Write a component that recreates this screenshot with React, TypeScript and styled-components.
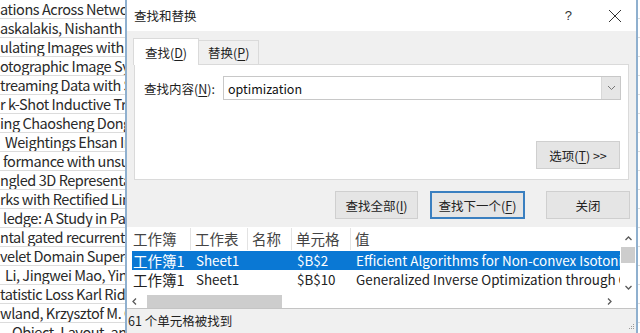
import styled, { createGlobalStyle } from 'styled-components';

const GlobalStyle = createGlobalStyle`
  html, body {
    margin: 0;
    padding: 0;
    background: #ffffff;
  }
  body {
    font-family: 'Noto Sans CJK SC', 'Noto Sans', sans-serif;
  }
`;

const sheetRows = [
  { text: 'ations Across Networks', indent: 0 },
  { text: 'askalakis, Nishanth Dikkala', indent: 0 },
  { text: 'ulating Images with Sketches', indent: 0 },
  { text: 'otographic Image Synthesis', indent: 0 },
  { text: 'treaming Data with Side', indent: 0 },
  { text: 'r k-Shot Inductive Transfer', indent: 0 },
  { text: 'ing Chaosheng Dong', indent: 0 },
  { text: 'Weightings Ehsan Imani', indent: 5 },
  { text: 'formance with unsupervised', indent: 3 },
  { text: 'ngled 3D Representations', indent: 0 },
  { text: 'rks with Rectified Linear', indent: 0 },
  { text: 'ledge: A Study in Paraphrase', indent: 3 },
  { text: 'ntal gated recurrent units', indent: 0 },
  { text: 'velet Domain Super-Resolution', indent: 0 },
  { text: 'Li, Jingwei Mao, Yin Zhang', indent: 5 },
  { text: 'tatistic Loss Karl Ridgeway', indent: 0 },
  { text: 'wland, Krzysztof M. Choromanski', indent: 0 },
  { text: 'Object, Layout, and Stuff', indent: 12 },
];

const results = [
  { book: '工作簿1', sheet: 'Sheet1', name: '', cell: '$B$2', value: 'Efficient Algorithms for Non-convex Isotonic Regression', selected: true },
  { book: '工作簿1', sheet: 'Sheet1', name: '', cell: '$B$10', value: 'Generalized Inverse Optimization through Online Learning', selected: false },
];

const Chevron = ({ dir }: { dir: 'up' | 'down' | 'left' | 'right' }) => {
  const paths = {
    up: 'M1.5 6 L4.5 3 L7.5 6',
    down: 'M1.5 3 L4.5 6 L7.5 3',
    left: 'M6 1.5 L3 4.5 L6 7.5',
    right: 'M3 1.5 L6 4.5 L3 7.5',
  };
  return (
    <ChevronSvg width="9" height="9" viewBox="0 0 9 9">
      <path d={paths[dir]} fill="none" stroke="#5a5a5a" strokeWidth="1.3" />
    </ChevronSvg>
  );
};

const App = () => {
  return (
    <>
      <GlobalStyle />
      <Screen>
        <Sheet>
          {sheetRows.map((row, i) => (
            <SheetRow key={i} $indent={row.indent}>
              {row.text}
            </SheetRow>
          ))}
        </Sheet>

        <Dialog>
          <TitleBar>
            <Title>查找和替换</Title>
            <TitleButtons>
              <HelpMark>?</HelpMark>
              <svg width="14" height="14" viewBox="0 0 14 14">
                <path d="M1 1 L13 13 M13 1 L1 13" stroke="#333" strokeWidth="1" />
              </svg>
            </TitleButtons>
          </TitleBar>

          <Body>
            <Tabs>
              <Tab $active>
                查找(<u>D</u>)
              </Tab>
              <Tab>
                替换(<u>P</u>)
              </Tab>
            </Tabs>
            <TabPanel>
              <FieldRow>
                <Label>
                  查找内容(<u>N</u>):
                </Label>
                <Combo>
                  <ComboText>optimization</ComboText>
                  <ComboArrow>
                    <svg width="9" height="6" viewBox="0 0 9 6">
                      <path d="M1 1 L4.5 4.5 L8 1" fill="none" stroke="#777" strokeWidth="1" />
                    </svg>
                  </ComboArrow>
                </Combo>
              </FieldRow>
              <OptionsRow>
                <Button $width={84}>
                  选项(<u>T</u>) &gt;&gt;
                </Button>
              </OptionsRow>
            </TabPanel>

            <ActionRow>
              <Button $width={83}>
                查找全部(<u>I</u>)
              </Button>
              <Button $width={95} $focused>
                查找下一个(<u>F</u>)
              </Button>
              <Button $width={84} $gapLeft={9}>
                关闭
              </Button>
            </ActionRow>
          </Body>

          <Results>
            <ListArea>
              <Table>
                <HeaderRow>
                  <HeadCell $first>工作簿</HeadCell>
                  <HeadCell>工作表</HeadCell>
                  <HeadCell>名称</HeadCell>
                  <HeadCell>单元格</HeadCell>
                  <HeadCell $last>值</HeadCell>
                </HeaderRow>
                {results.map((r, i) => (
                  <ResultRow key={i} $selected={r.selected}>
                    <Cell $first>{r.book}</Cell>
                    <Cell>{r.sheet}</Cell>
                    <Cell>{r.name}</Cell>
                    <Cell>{r.cell}</Cell>
                    <Cell>{r.value}</Cell>
                  </ResultRow>
                ))}
              </Table>
              <VScroll>
                <Chevron dir="up" />
                <VThumb />
                <Spacer />
                <Chevron dir="down" />
              </VScroll>
            </ListArea>
            <HScroll>
              <Chevron dir="left" />
              <HThumb />
              <Spacer />
              <Chevron dir="right" />
            </HScroll>
          </Results>

          <StatusBar>
            61 个单元格被找到
            <Grip>
              <svg width="8" height="8" viewBox="0 0 8 8">
                <rect x="6" y="2" width="1" height="1" fill="#9a9a9a" />
                <rect x="4" y="4" width="1" height="1" fill="#9a9a9a" />
                <rect x="6" y="4" width="1" height="1" fill="#9a9a9a" />
                <rect x="2" y="6" width="1" height="1" fill="#9a9a9a" />
                <rect x="4" y="6" width="1" height="1" fill="#9a9a9a" />
                <rect x="6" y="6" width="1" height="1" fill="#9a9a9a" />
              </svg>
            </Grip>
          </StatusBar>
        </Dialog>
      </Screen>
    </>
  );
};

const Screen = styled.div`
  position: relative;
  width: 640px;
  height: 333px;
  overflow: hidden;
  background: #ffffff;
`;

const Sheet = styled.div`
  display: flex;
  flex-direction: column;
  width: 640px;
`;

const SheetRow = styled.div<{ $indent: number }>`
  height: 18px;
  line-height: 17px;
  border-bottom: 1px solid #dcdcdc;
  padding-left: ${(p) => p.$indent}px;
  font-family: 'Noto Sans CJK SC', 'Noto Sans', sans-serif;
  font-size: 14.5px;
  letter-spacing: -0.45px;
  color: #2a2a2a;
  white-space: nowrap;
  overflow: hidden;
`;

const Dialog = styled.div`
  position: absolute;
  left: 125px;
  top: 0;
  width: 509px;
  height: 333px;
  border-left: 2px solid #8fb0cf;
  border-right: 2px solid #8fb0cf;
  background: #f0f0f0;
  overflow: hidden;

  display: flex;
  flex-direction: column;
  font-family: 'Noto Sans CJK SC', 'Noto Sans', sans-serif;
  color: #1e1e1e;
`;

const TitleBar = styled.div`
  height: 31px;
  flex: none;
  background: #ffffff;
  display: flex;
  align-items: center;
  justify-content: space-between;
  padding: 0 14px 0 7px;
`;

const Title = styled.span`
  font-size: 12.5px;
  color: #222;
`;

const TitleButtons = styled.div`
  display: flex;
  align-items: center;
  gap: 36px;
`;

const HelpMark = styled.span`
  font-family: 'Liberation Sans', sans-serif;
  font-size: 13px;
  color: #333;
`;

const Body = styled.div`
  flex: none;
  padding: 8px 6px 0 6px;
  display: flex;
  flex-direction: column;
`;

const Tabs = styled.div`
  display: flex;
  align-items: flex-end;
  height: 26px;
  margin-bottom: -1px;
  position: relative;
  z-index: 1;
`;

const Tab = styled.div<{ $active?: boolean }>`
  height: ${(p) => (p.$active ? 27 : 25)}px;
  padding: 0 ${(p) => (p.$active ? 11 : 9)}px;
  box-sizing: border-box;
  display: flex;
  align-items: center;
  font-size: 12.5px;
  background: ${(p) => (p.$active ? '#ffffff' : '#f0f0f0')};
  border: 1px solid #dadada;
  border-bottom: ${(p) => (p.$active ? 'none' : '1px solid #dadada')};
  margin-left: ${(p) => (p.$active ? 0 : -1)}px;

  & u {
    text-decoration-thickness: 1px;
    text-underline-offset: 2px;
  }
`;

const TabPanel = styled.div`
  height: 116px;
  box-sizing: border-box;
  margin: 0 1px 0 1px;
  background: #ffffff;
  border: 1px solid #dadada;
  padding: 11px 7px 0 9px;
  display: flex;
  flex-direction: column;
`;

const FieldRow = styled.div`
  display: flex;
  align-items: center;
  gap: 9px;
`;

const Label = styled.span`
  font-size: 12.5px;
  width: 70px;
  white-space: nowrap;

  & u {
    text-underline-offset: 2px;
  }
`;

const Combo = styled.div`
  flex: 1;
  height: 24px;
  box-sizing: border-box;
  border: 1px solid #c8c8c8;
  display: flex;
  align-items: stretch;
  background: #ffffff;
`;

const ComboText = styled.div`
  flex: 1;
  display: flex;
  align-items: center;
  padding-left: 4px;
  font-size: 12.5px;
  color: #111;
`;

const ComboArrow = styled.div`
  width: 18px;
  background: #e6e6e6;
  border-left: 1px solid #d8d8d8;
  display: flex;
  align-items: center;
  justify-content: center;
`;

const OptionsRow = styled.div`
  display: flex;
  justify-content: flex-end;
  margin-top: 41px;
  padding-right: 1px;
`;

const Button = styled.div<{ $width: number; $focused?: boolean; $gapLeft?: number }>`
  width: ${(p) => p.$width}px;
  height: 28px;
  box-sizing: border-box;
  margin-left: ${(p) => p.$gapLeft ?? 0}px;
  display: flex;
  align-items: center;
  justify-content: center;
  font-size: 12.5px;
  color: #222;
  background: #e5e5e5;
  border: ${(p) => (p.$focused ? '2px solid #3a7fc0' : '1px solid #cfcfcf')};
  white-space: nowrap;

  & u {
    text-underline-offset: 2px;
  }
`;

const ActionRow = styled.div`
  display: flex;
  justify-content: flex-end;
  gap: 12px;
  margin-top: 11px;
`;

const Results = styled.div`
  margin-top: 8px;
  height: 81px;
  flex: none;
  background: #ffffff;
  display: flex;
  flex-direction: column;
`;

const ListArea = styled.div`
  height: 67px;
  display: flex;
  min-width: 0;
`;

const Table = styled.div`
  flex: 1;
  min-width: 0;
  display: flex;
  flex-direction: column;
  padding-left: 5px;
  overflow: hidden;
`;

const columns = '59px 57px 44px 59px minmax(0, 1fr)';

const HeaderRow = styled.div`
  display: grid;
  grid-template-columns: ${columns};
  height: 24px;
  flex: none;
  align-items: center;
`;

const HeadCell = styled.div<{ $first?: boolean; $last?: boolean }>`
  font-size: 14.5px;
  color: #444;
  padding-left: ${(p) => (p.$first ? 1 : 4)}px;
  height: 22px;
  line-height: 22px;
  border-right: ${(p) => (p.$last ? 'none' : '1px solid #e3e3e3')};
  white-space: nowrap;
`;

const ResultRow = styled.div<{ $selected: boolean }>`
  display: grid;
  grid-template-columns: ${columns};
  height: 19px;
  flex: none;
  align-items: center;
  background: ${(p) => (p.$selected ? '#0a78d4' : '#ffffff')};
  color: ${(p) => (p.$selected ? '#ffffff' : '#222')};
`;

const Cell = styled.div<{ $first?: boolean }>`
  font-size: ${(p) => (p.$first ? 14.5 : 13.4)}px;
  padding-left: ${(p) => (p.$first ? 1 : 5)}px;
  white-space: nowrap;
  overflow: hidden;
  line-height: 19px;
`;

const ChevronSvg = styled.svg`
  flex: none;
  display: block;
`;

const VScroll = styled.div`
  width: 16px;
  flex: none;
  display: flex;
  flex-direction: column;
  align-items: center;
  padding: 7px 0 2px;
  box-sizing: border-box;
  background: #ffffff;
`;

const VThumb = styled.div`
  width: 14px;
  height: 16px;
  margin-top: 4px;
  flex: none;
  background: #cdcdcd;
`;

const Spacer = styled.div`
  flex: 1;
`;

const HScroll = styled.div`
  height: 14px;
  flex: none;
  display: flex;
  align-items: center;
  padding: 0 22px 0 3px;
  background: #ffffff;
`;

const HThumb = styled.div`
  width: 135px;
  height: 13px;
  margin-left: 8px;
  flex: none;
  background: #cdcdcd;
`;

const StatusBar = styled.div`
  flex: 1;
  border-top: 1px solid #c4c4c4;
  display: flex;
  align-items: center;
  justify-content: space-between;
  padding-left: 1px;
  padding-bottom: 2px;
  font-size: 12.5px;
  color: #222;
`;

const Grip = styled.div`
  align-self: flex-end;
  padding: 0 1px 1px 0;
  line-height: 0;
`;

export default App;
